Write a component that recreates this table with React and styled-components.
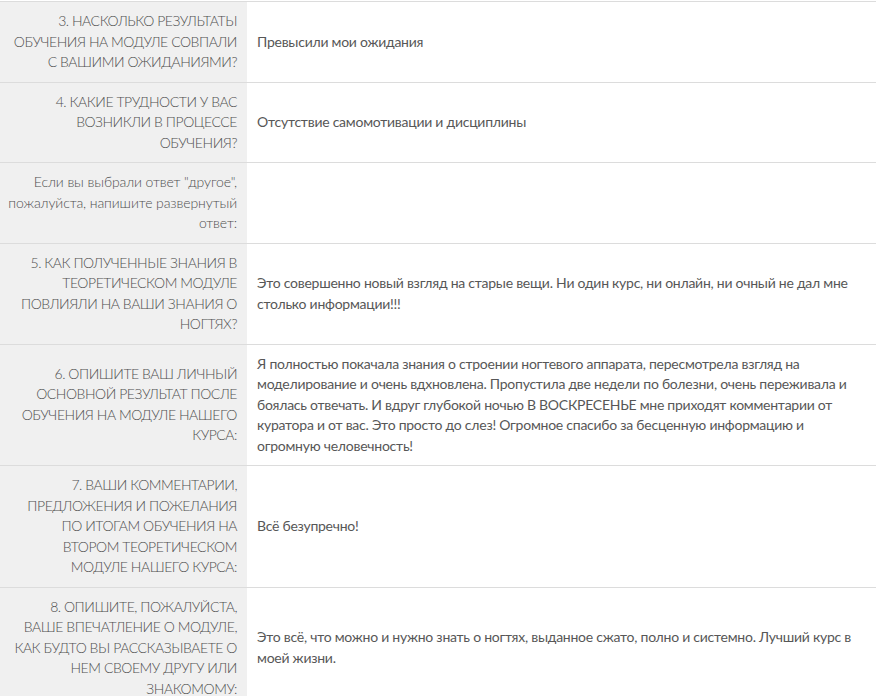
import styled, { createGlobalStyle } from "styled-components";

const GlobalStyle = createGlobalStyle`
  body {
    margin: 0;
    background: #fff;
    font-family: Lato, "Liberation Sans", sans-serif;
  }
`;

const Table = styled.table`
  width: 100%;
  margin-top: 1px;
  border-collapse: collapse;
  font-size: 14px;
  line-height: 20.5px;
  letter-spacing: -0.25px;
`;

const Row = styled.tr`
  border-top: 1px solid #dcdcdc;
`;

const Question = styled.th`
  width: ${(p) => (p.$plain ? "231px" : "227px")};
  padding: 9px 10px 9px ${(p) => (p.$plain ? "6px" : "10px")};
  background: #f0f0f0;
  color: #4f4f4f;
  font-weight: 300;
  letter-spacing: ${(p) => (p.$plain ? "-0.1px" : "-0.45px")};
  text-align: right;
  vertical-align: middle;
  text-transform: ${(p) => (p.$plain ? "none" : "uppercase")};
`;

const Answer = styled.td`
  padding: 9px 10px;
  color: #575757;
  vertical-align: middle;
`;

const rows = [
  {
    q: "3. Насколько результаты обучения на модуле совпали с вашими ожиданиями?",
    a: "Превысили мои ожидания",
  },
  {
    q: "4. Какие трудности у вас возникли в процессе обучения?",
    a: "Отсутствие самомотивации и дисциплины",
  },
  {
    q: 'Если вы выбрали ответ "другое", пожалуйста, напишите развернутый ответ:',
    a: "",
    plain: true,
  },
  {
    q: "5. Как полученные знания в теоретическом модуле повлияли на ваши знания о ногтях?",
    a: "Это совершенно новый взгляд на старые вещи. Ни один курс, ни онлайн, ни очный не дал мне столько информации!!!",
  },
  {
    q: "6. Опишите ваш личный основной результат после обучения на модуле нашего курса:",
    a: "Я полностью покачала знания о строении ногтевого аппарата, пересмотрела взгляд на моделирование и очень вдхновлена. Пропустила две недели по болезни, очень переживала и боялась отвечать. И вдруг глубокой ночью В ВОСКРЕСЕНЬЕ мне приходят комментарии от куратора и от вас. Это просто до слез! Огромное спасибо за бесценную информацию и огромную человечность!",
  },
  {
    q: "7. Ваши комментарии, предложения и пожелания по итогам обучения на втором теоретическом модуле нашего курса:",
    a: "Всё безупречно!",
  },
  {
    q: "8. Опишите, пожалуйста, ваше впечатление о модуле, как будто вы рассказываете о нем своему другу или знакомому:",
    a: "Это всё, что можно и нужно знать о ногтях, выданное сжато, полно и системно. Лучший курс в моей жизни.",
  },
];

export default function App() {
  return (
    <>
      <GlobalStyle />
      <Table>
        <tbody>
          {rows.map((row, i) => (
            <Row key={i}>
              <Question $plain={row.plain}>{row.q}</Question>
              <Answer>{row.a}</Answer>
            </Row>
          ))}
        </tbody>
      </Table>
    </>
  );
}
